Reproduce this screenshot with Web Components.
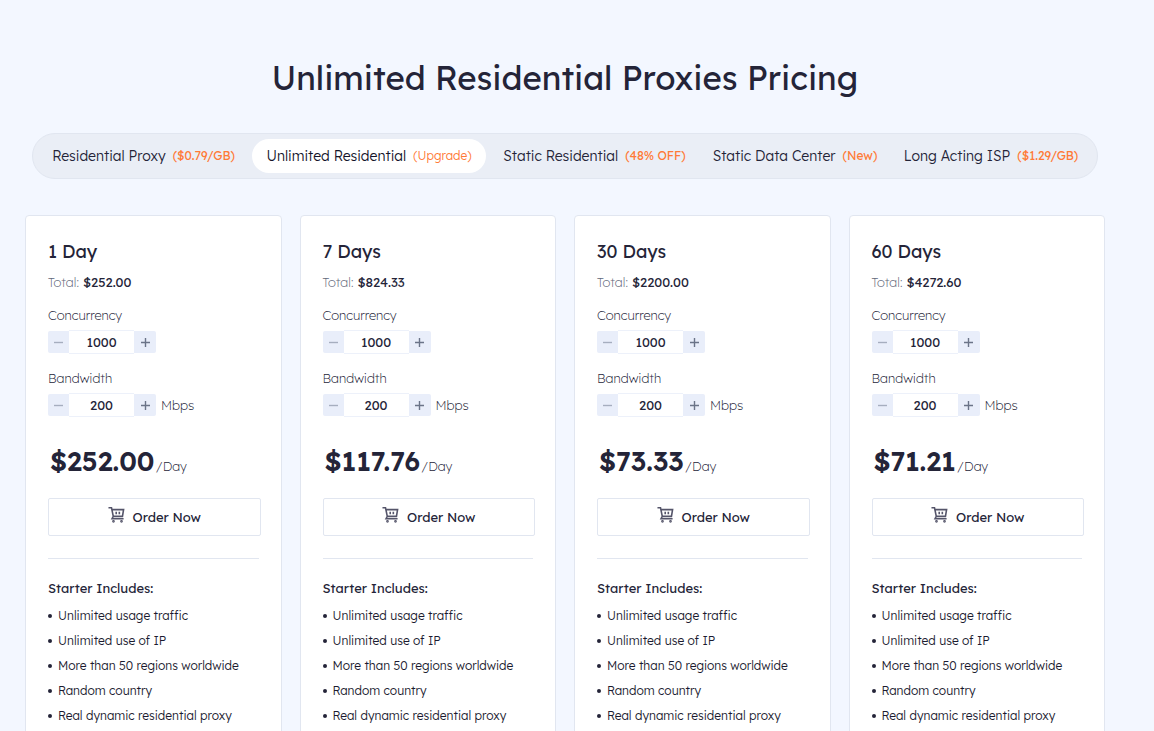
<!DOCTYPE html>
<html lang="en">
<head>
<meta charset="utf-8">
<meta name="viewport" content="width=device-width, initial-scale=1">
<title>Unlimited Residential Proxies Pricing</title>
<style>
  body {
    margin: 0;
    background: #f3f7ff;
    color: #242438;
    font: 400 13px/20px Lexend, Inter, "Open Sans", sans-serif;
  }
</style>
</head>
<body>
<pricing-page>
  <span slot="title">Unlimited Residential Proxies Pricing</span>
  <tab-bar slot="tabs">
    <price-tab note="($0.79/GB)" strong>Residential Proxy</price-tab>
    <price-tab note="(Upgrade)" active>Unlimited Residential</price-tab>
    <price-tab note="(48% OFF)" strong>Static Residential</price-tab>
    <price-tab note="(New)" strong>Static Data Center</price-tab>
    <price-tab note="($1.29/GB)" strong>Long Acting ISP</price-tab>
  </tab-bar>
  <plan-card total="$252.00" price="$252.00">1 Day</plan-card>
  <plan-card total="$824.33" price="$117.76">7 Days</plan-card>
  <plan-card total="$2200.00" price="$73.33">30 Days</plan-card>
  <plan-card total="$4272.60" price="$71.21">60 Days</plan-card>
</pricing-page>

<script>
class PricingPage extends HTMLElement {
  constructor() {
    super();
    this.attachShadow({ mode: 'open' }).innerHTML = `
      <style>
        :host { display: block; }
        main { padding: 56px 49px 24px 25px; }
        h1 { margin: 0; font-size: 33px; line-height: 44px; font-weight: 440; text-align: center; }
        nav { margin: 33px 7px 36px; }
        section { display: grid; grid-template-columns: repeat(4, minmax(0, 1fr)); gap: 18px; }
      </style>
      <main>
        <h1><slot name="title"></slot></h1>
        <nav><slot name="tabs"></slot></nav>
        <section><slot></slot></section>
      </main>`;
  }
}

class TabBar extends HTMLElement {
  constructor() {
    super();
    this.attachShadow({ mode: 'open' }).innerHTML = `
      <style>
        :host {
          display: grid;
          grid-template-columns: 209fr 242fr 209fr 192fr 200fr;
          padding: 5px 6px;
          border: 1px solid #e1e6f0;
          border-radius: 23px;
          background: #eaeef6;
        }
      </style>
      <slot></slot>`;
  }
}

class PriceTab extends HTMLElement {
  constructor() {
    super();
    this.attachShadow({ mode: 'open' }).innerHTML = `
      <style>
        :host { display: block; }
        :host([active]) { padding: 0 4px; }
        a {
          display: flex; justify-content: center; align-items: center; gap: 7px;
          height: 34px; border-radius: 17px;
          color: inherit; text-decoration: none; white-space: nowrap;
          font-size: 14px; font-weight: 300;
        }
        :host([active]) a { background: #fff; color: #14142a; }
        .note { font-size: 12px; color: #ff7a37; }
        :host([strong]) .note { font-weight: 400; }
      </style>
      <a href="#"><span><slot></slot></span><span class="note"></span></a>`;
  }
  connectedCallback() {
    this.shadowRoot.querySelector('.note').textContent = this.getAttribute('note');
    if (this.hasAttribute('active')) {
      this.shadowRoot.querySelector('a').setAttribute('aria-current', 'page');
    }
  }
}

class QuantityStepper extends HTMLElement {
  constructor() {
    super();
    this.attachShadow({ mode: 'open' }).innerHTML = `
      <style>
        :host { display: block; }
        label { display: block; font-weight: 250; }
        .row { display: flex; align-items: center; margin-top: 5px; }
        button {
          display: grid; place-items: center;
          width: 21px; height: 22px; padding: 0; border: 0;
          background: #e9eefa; color: #6b7488;
        }
        button:first-child { border-radius: 2px 0 0 2px; color: #a6aebf; }
        button:last-of-type { width: 22px; border-radius: 0 2px 2px 0; }
        svg { width: 9px; height: 9px; fill: none; stroke: currentColor; stroke-width: 1.4; }
        input {
          box-sizing: border-box; width: 65px; height: 24px; padding: 0;
          border: solid #edf1fa; border-width: 1px 0; background: #fff;
          font: inherit; color: inherit; text-align: center; outline: 0;
        }
        .unit { margin-left: 5px; font-weight: 250; }
      </style>
      <label for="qty"></label>
      <div class="row">
        <button type="button" aria-label="Decrease"><svg viewBox="0 0 9 9"><path d="M0 4.5h9"/></svg></button>
        <input id="qty" type="text" inputmode="numeric">
        <button type="button" aria-label="Increase"><svg viewBox="0 0 9 9"><path d="M0 4.5h9M4.5 0v9"/></svg></button>
        <span class="unit"></span>
      </div>`;
  }
  connectedCallback() {
    const root = this.shadowRoot;
    const input = root.querySelector('input');
    const step = Number(this.getAttribute('value'));
    root.querySelector('label').textContent = this.getAttribute('label');
    root.querySelector('.unit').textContent = this.getAttribute('unit') || '';
    input.value = step;
    const [less, more] = root.querySelectorAll('button');
    less.onclick = () => { input.value = Math.max(step, Number(input.value) - step); };
    more.onclick = () => { input.value = Number(input.value) + step; };
  }
}

class PlanCard extends HTMLElement {
  constructor() {
    super();
    this.attachShadow({ mode: 'open' }).innerHTML = `
      <style>
        :host {
          display: block; padding: 24px 22px;
          border: 1px solid #e1e6f0; border-radius: 4px; background: #fff;
        }
        h2 { margin: 0; font-size: 18px; line-height: 24px; font-weight: 400; }
        .total { margin: 8px 0 13px; font-weight: 250; color: #5f6779; }
        .total b { font-weight: 400; color: #242438; }
        quantity-stepper + quantity-stepper { margin-top: 14px; }
        .price { display: flex; align-items: baseline; gap: 1px; margin: 26px 0 14px 2px; line-height: 36px; }
        .price strong { font-size: 27px; font-weight: 600; }
        .price span { font-weight: 250; }
        .order {
          display: flex; justify-content: center; align-items: center; gap: 8px;
          box-sizing: border-box; width: calc(100% + 2px); height: 38px;
          padding: 0; border: 1px solid #e1e6f0; border-radius: 2px;
          background: #fff; color: inherit; font: inherit; cursor: pointer;
        }
        .order svg { width: 17px; height: 17px; margin-bottom: 6px; fill: none; stroke: #55556a; stroke-width: 1.7; }
        hr { height: 1px; margin: 22px 0 19px; border: 0; background: #e1e6f0; }
        h3 { margin: 0 0 5px; font-size: 13px; line-height: 20px; font-weight: 400; }
        ul { margin: 0; padding: 0; list-style: none; font-size: 12px; line-height: 25px; font-weight: 300; color: #1b1b30; }
        li { display: flex; align-items: center; gap: 6px; white-space: nowrap; }
        li::before { content: ""; width: 4px; height: 4px; border-radius: 50%; background: #242438; }
      </style>
      <h2><slot></slot></h2>
      <p class="total">Total: <b></b></p>
      <quantity-stepper label="Concurrency" value="1000"></quantity-stepper>
      <quantity-stepper label="Bandwidth" value="200" unit="Mbps"></quantity-stepper>
      <div class="price"><strong></strong><span>/Day</span></div>
      <button class="order" type="button">
        <svg viewBox="0 0 18 18" aria-hidden="true">
          <path d="M.5 1.800h3.200l1.900 9.200-1.300 2.500h12.200M4.300 3.800h12.200l-1.200 7.200h-9.700M8.700 6v2.800M12 6v2.800"/>
          <circle cx="5.800" cy="16.200" r=".6"/><circle cx="14.300" cy="16.200" r=".6"/>
        </svg>
        <span>Order Now</span>
      </button>
      <hr>
      <h3>Starter Includes:</h3>
      <ul>
        <li>Unlimited usage traffic</li>
        <li>Unlimited use of IP</li>
        <li>More than 50 regions worldwide</li>
        <li>Random country</li>
        <li>Real dynamic residential proxy</li>
      </ul>`;
  }
  connectedCallback() {
    this.shadowRoot.querySelector('.total b').textContent = this.getAttribute('total');
    this.shadowRoot.querySelector('.price strong').textContent = this.getAttribute('price');
  }
}

customElements.define('pricing-page', PricingPage);
customElements.define('tab-bar', TabBar);
customElements.define('price-tab', PriceTab);
customElements.define('quantity-stepper', QuantityStepper);
customElements.define('plan-card', PlanCard);
</script>
</body>
</html>
